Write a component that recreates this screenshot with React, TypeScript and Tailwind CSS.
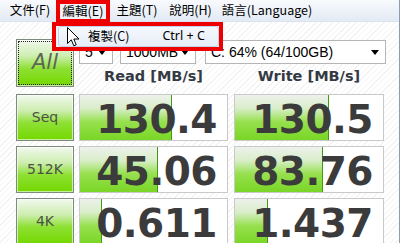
import React from 'react';

const menuItems = [
  { label: '文件(F)', w: 'w-[52px]' },
  { label: '編輯(E)', w: 'w-[54px]', active: true },
  { label: '主題(T)', w: 'w-[54px]' },
  { label: '說明(H)', w: 'w-[53px]' },
  { label: '語言(Language)', w: 'w-[100px]' },
];

const rows = [
  { label: 'Seq', read: '130.4', readBar: 92, write: '130.5', writeBar: 94 },
  { label: '512K', read: '45.06', readBar: 78, write: '83.76', writeBar: 88 },
  { label: '4K', read: '0.611', readBar: 22, write: '1.437', writeBar: 33 },
];

function GreenButton({ children, className = '' }: { children: React.ReactNode; className?: string }) {
  return (
    <div
      className={`w-[58px] border border-[#7d8a7d] bg-[linear-gradient(to_bottom,#f2f8ee_0%,#cdeeb0_35%,#8ee034_62%,#74d800_100%)] shadow-[inset_0_0_0_1px_rgba(255,255,255,0.6)] flex items-center justify-center text-[#4a5244] ${className}`}
    >
      {children}
    </div>
  );
}

function ResultCell({ value, bar, width }: { value: string; bar: number; width: string }) {
  return (
    <div className={`relative ${width} h-[47px] border border-[#c9c9c9] bg-white overflow-hidden`}>
      <div
        className="absolute left-0 top-0 bottom-0 border-r border-[#3f9a14] bg-[linear-gradient(to_bottom,#eef1ec_0%,#d8eec8_30%,#96e04e_60%,#7ad626_100%)]"
        style={{ width: bar }}
      />
      <div className="relative text-right pr-[10px] pt-[6px] leading-[38px] text-[39px] font-bold text-[#3b3b3b] font-['DejaVu_Sans',sans-serif] tracking-[-0.5px]">
        {value}
      </div>
    </div>
  );
}

function Combo({ text, width }: { text: string; width: string }) {
  return (
    <div className={`${width} h-[24px] border border-[#b5b5b5] bg-white flex items-center justify-between pl-[5px] pr-[6px] text-[14px] text-black font-['Liberation_Sans',sans-serif]`}>
      <span>{text}</span>
      <svg width="8" height="5" viewBox="0 0 8 5"><path d="M0 0h8L4 5z" fill="#000" /></svg>
    </div>
  );
}

export default function App() {
  return (
    <div className="relative w-[401px] h-[243px] overflow-hidden bg-white">
      <div className="w-[400px] h-[243px] border-r border-[#8c9db3] bg-[repeating-linear-gradient(135deg,#ffffff_0px,#ffffff_3px,#f3f3f3_3px,#f3f3f3_4px)]">
        {/* menu bar */}
        <div className="h-[22px] flex items-center pl-[4px] bg-[linear-gradient(to_bottom,#f8fafd,#e3eaf4)] border-b border-[#dbe3ee] font-['Noto_Sans_CJK_TC',sans-serif] text-[12.5px] text-black">
          {menuItems.map((m) => (
            <div
              key={m.label}
              className={`${m.w} h-[22px] flex items-center justify-center ${m.active ? 'border-[4px] border-[#ee0000] border-b-[3px] bg-[#eef2f8]' : ''}`}
            >
              {m.label}
            </div>
          ))}
        </div>

        {/* top block */}
        <div className="flex pl-[16px] pt-[17px]">
          <GreenButton className="h-[48px]">
            <div className="w-[54px] h-[44px] border border-dotted border-[#222] flex items-center justify-center italic text-[21px] font-['DejaVu_Sans',sans-serif] text-[#5b6652]">
              All
            </div>
          </GreenButton>
          <div className="ml-[5px] flex flex-col">
            <div className="flex items-center mt-[1px]">
              <Combo text="5" width="w-[34px]" />
              <div className="w-[7px]" />
              <Combo text="1000MB" width="w-[76px]" />
              <div className="w-[9px]" />
              <Combo text="C: 64% (64/100GB)" width="w-[181px]" />
            </div>
            <div className="flex h-[26px] items-center font-['DejaVu_Sans',sans-serif] font-bold text-[14.5px] text-[#333a44]">
              <div className="w-[149px] text-center">Read [MB/s]</div>
              <div className="w-[6px]" />
              <div className="w-[150px] text-center">Write [MB/s]</div>
            </div>
          </div>
        </div>

        {/* result rows */}
        <div className="flex flex-col gap-[5px] pl-[16px] pt-[4px]">
          {rows.map((r) => (
            <div key={r.label} className="flex items-start">
              <GreenButton className="h-[47px]">
                <span className="text-[14px] font-['DejaVu_Sans',sans-serif]">{r.label}</span>
              </GreenButton>
              <div className="w-[5px]" />
              <ResultCell value={r.read} bar={r.readBar} width="w-[149px]" />
              <div className="w-[6px]" />
              <ResultCell value={r.write} bar={r.writeBar} width="w-[150px]" />
            </div>
          ))}
        </div>
      </div>

      {/* dropdown popup */}
      <div className="absolute left-[52px] top-[22px] w-[171px] h-[29px] border-[4px] border-[#ee0000] bg-[#f1f4f9] font-['Noto_Sans_CJK_TC',sans-serif] text-[12.5px] text-black">
        <div className="absolute left-[2px] right-[0px] top-[0px] bottom-[0px] rounded-[3px] border border-[#c3d3ea] bg-[linear-gradient(to_bottom,#f6f9fd,#e6edf7)] flex items-center">
          <span className="ml-[29px]">複製(C)</span>
          <span className="ml-[33px] font-['Noto_Sans',sans-serif]">Ctrl + C</span>
        </div>
      </div>

      {/* mouse cursor */}
      <svg className="absolute left-[67px] top-[27px]" width="13" height="20" viewBox="0 0 13 20">
        <path d="M0.5 0.5 L0.5 16.5 L4.3 12.8 L6.8 18.8 L9.2 17.8 L6.8 12 L12 12 Z" fill="#fff" stroke="#000" strokeWidth="1" strokeLinejoin="miter" />
      </svg>
    </div>
  );
}
